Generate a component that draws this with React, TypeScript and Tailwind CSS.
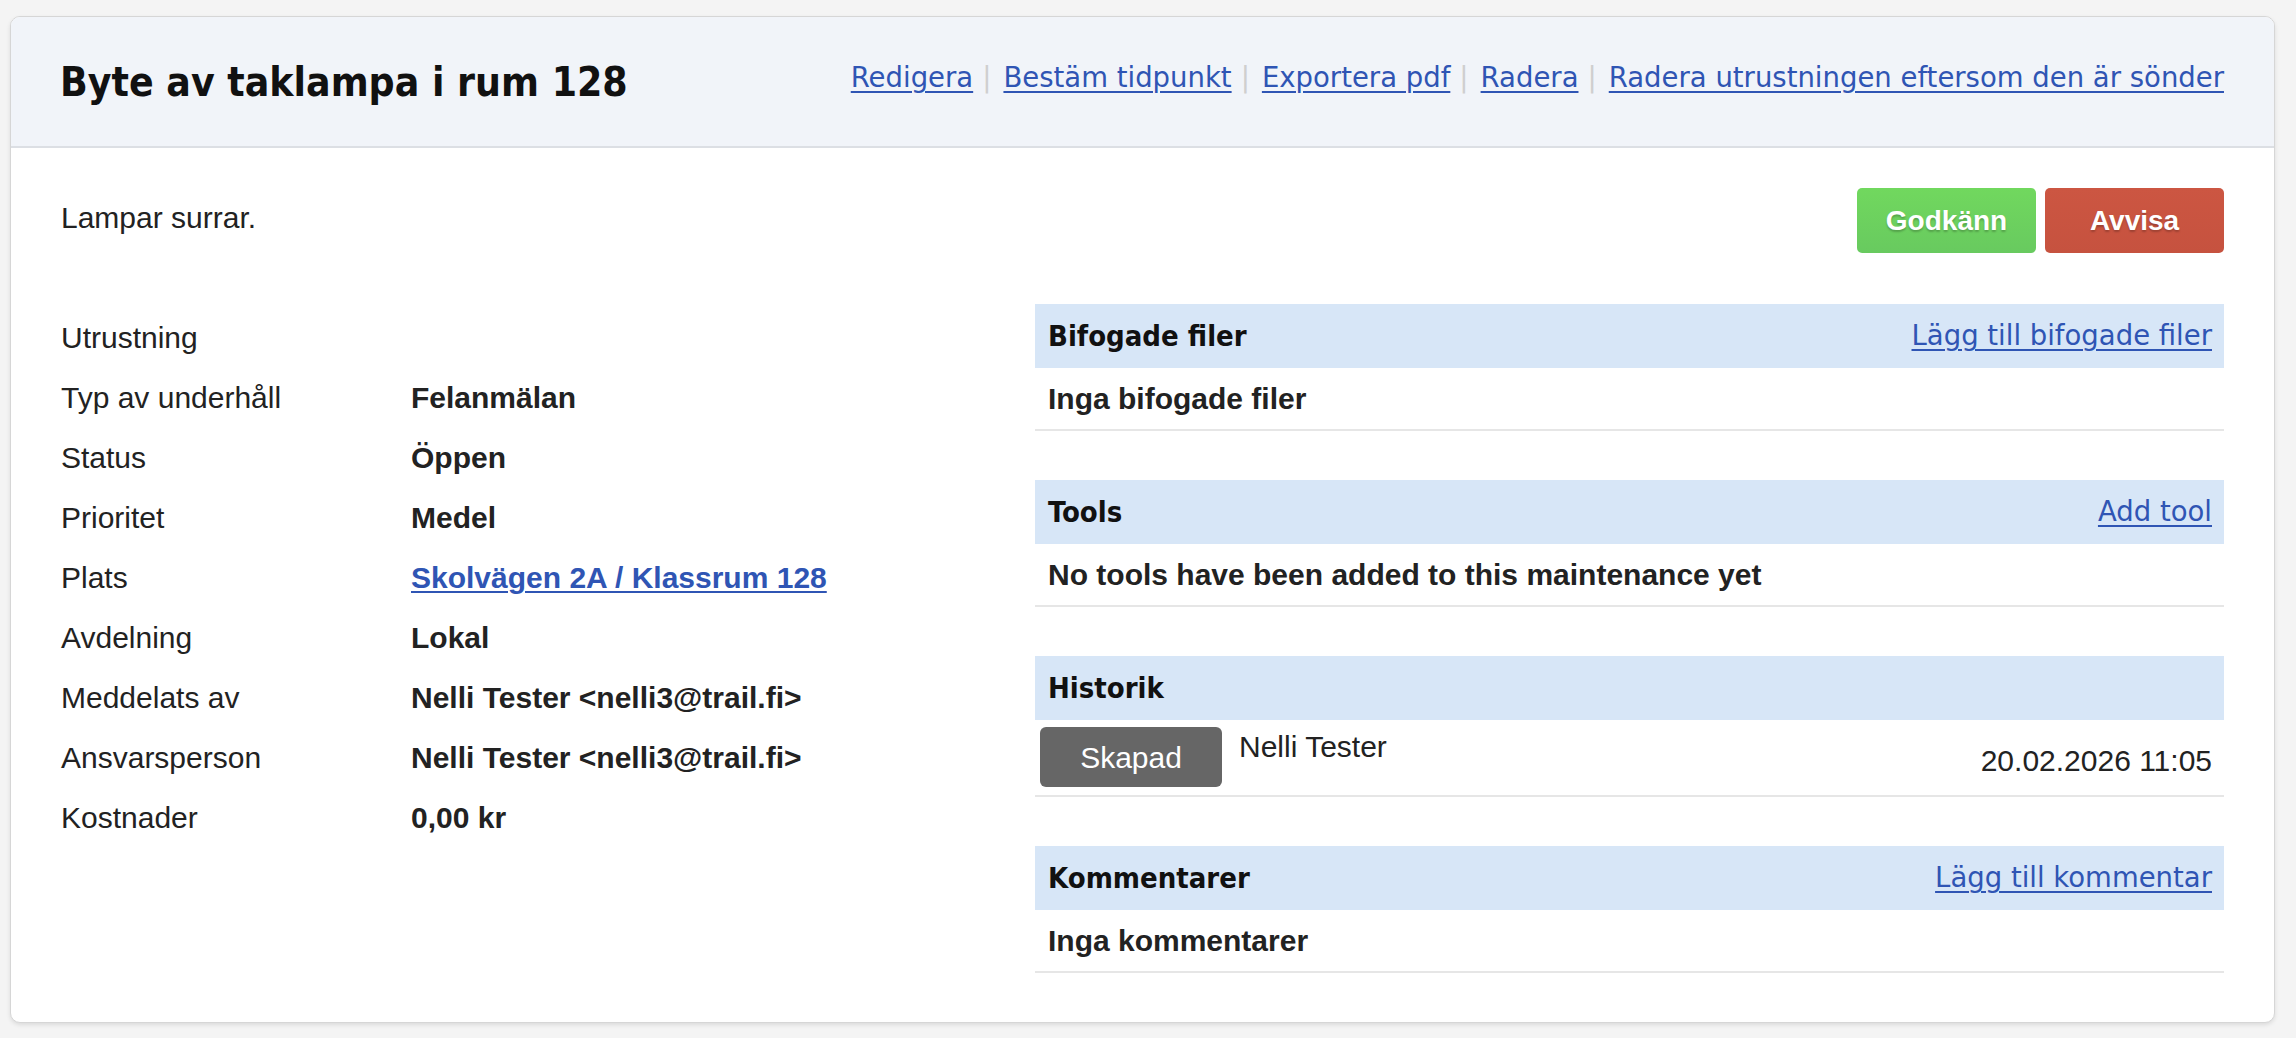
import React from "react";

const HEAD = "font-['DejaVu_Sans_Condensed','DejaVu_Sans',sans-serif] font-bold";
const LINK = "font-['DejaVu_Sans',sans-serif] text-[#2f55b4] underline decoration-2 underline-offset-[4px]";
const BODY = "font-['Liberation_Sans',Arial,sans-serif]";

const rows: { label: string; value: string; link?: boolean }[] = [
  { label: "Utrustning", value: "" },
  { label: "Typ av underhåll", value: "Felanmälan" },
  { label: "Status", value: "Öppen" },
  { label: "Prioritet", value: "Medel" },
  { label: "Plats", value: "Skolvägen 2A / Klassrum 128", link: true },
  { label: "Avdelning", value: "Lokal" },
  { label: "Meddelats av", value: "Nelli Tester <nelli3@trail.fi>" },
  { label: "Ansvarsperson", value: "Nelli Tester <nelli3@trail.fi>" },
  { label: "Kostnader", value: "0,00 kr" },
];

function SectionHeader({ title, link }: { title: string; link?: string }) {
  return (
    <div className="h-[64px] bg-[#d7e6f7] flex items-center justify-between pl-[13px] pr-[12px]">
      <span className={`${HEAD} text-[29px] text-[#111] leading-none`}>{title}</span>
      {link && <a className={`${LINK} text-[27.5px] leading-none`}>{link}</a>}
    </div>
  );
}

function SimpleSection({ title, link, body, last }: { title: string; link?: string; body: string; last?: boolean }) {
  return (
    <div className={last ? "" : "mb-[49px]"}>
      <SectionHeader title={title} link={link} />
      <div className={`h-[63px] border-b-2 border-[#e6e6e6] flex items-center pl-[13px] ${BODY} font-bold text-[30px] text-[#222]`}>
        {body}
      </div>
    </div>
  );
}

export default function App() {
  const links = ["Redigera", "Bestäm tidpunkt", "Exportera pdf", "Radera", "Radera utrustningen eftersom den är sönder"];
  return (
    <div className="min-h-[1038px] bg-[#f4f4f4] pt-[16px] pl-[10px]">
      <div className="w-[2265px] rounded-[10px] border border-[#d6d6d6] bg-white shadow-[0_2px_4px_rgba(0,0,0,0.10)] overflow-hidden">
        <div className="h-[131px] bg-[#f1f4f9] border-b-2 border-[#dcdfe4] flex items-center justify-between pl-[49px] pr-[50px]">
          <h1 className={`${HEAD} text-[40.5px] text-[#111] leading-none mt-[2px]`}>Byte av taklampa i rum 128</h1>
          <div className="flex items-center mb-[8px] text-[27.5px] leading-none">
            {links.map((l, i) => (
              <React.Fragment key={l}>
                {i > 0 && <span className="font-['DejaVu_Sans',sans-serif] text-[#cfcfcf] ml-[9px] mr-[12px]">|</span>}
                <a className={LINK}>{l}</a>
              </React.Fragment>
            ))}
          </div>
        </div>
        <div className="px-[50px] pt-[40px] pb-[49px]">
          <div className="flex items-center justify-between h-[65px]">
            <p className={`${BODY} text-[30px] text-[#222] -mt-[6px]`}>Lampar surrar.</p>
            <div className="flex gap-[9px]">
              <button className={`${BODY} w-[179px] h-[65px] rounded-[5px] bg-linear-to-b from-[#71d85e] to-[#68ca5f] text-white font-bold text-[28px] [text-shadow:0_2px_2px_rgba(0,0,0,0.22)]`}>
                Godkänn
              </button>
              <button className={`${BODY} w-[179px] h-[65px] rounded-[5px] bg-linear-to-b from-[#cc5642] to-[#c6523f] text-white font-bold text-[28px] [text-shadow:0_2px_2px_rgba(0,0,0,0.22)]`}>
                Avvisa
              </button>
            </div>
          </div>
          <div className="mt-[51px] grid grid-cols-[974px_1189px]">
            <div className="pt-[3px]">
              {rows.map((r) => (
                <div key={r.label} className={`h-[60px] flex items-center ${BODY} text-[30px] text-[#222]`}>
                  <span className="w-[350px] shrink-0">{r.label}</span>
                  {r.link ? (
                    <a className="font-bold text-[#2f55b4] underline decoration-2 underline-offset-[3px]">{r.value}</a>
                  ) : (
                    <span className="font-bold">{r.value}</span>
                  )}
                </div>
              ))}
            </div>
            <div>
              <SimpleSection title="Bifogade filer" link="Lägg till bifogade filer" body="Inga bifogade filer" />
              <SimpleSection title="Tools" link="Add tool" body="No tools have been added to this maintenance yet" />
              <div className="mb-[49px]">
                <SectionHeader title="Historik" />
                <div className={`h-[77px] border-b-2 border-[#e6e6e6] flex items-start pt-[7px] pl-[5px] pr-[12px] ${BODY} text-[30px] text-[#222]`}>
                  <div className="w-[182px] h-[60px] rounded-[6px] bg-[#666666] text-white flex items-center justify-center">Skapad</div>
                  <span className="ml-[17px] mt-[3px] leading-[34px]">Nelli Tester</span>
                  <span className="ml-auto self-center -mt-[2px]">20.02.2026 11:05</span>
                </div>
              </div>
              <SimpleSection title="Kommentarer" link="Lägg till kommentar" body="Inga kommentarer" last />
            </div>
          </div>
        </div>
      </div>
    </div>
  );
}
